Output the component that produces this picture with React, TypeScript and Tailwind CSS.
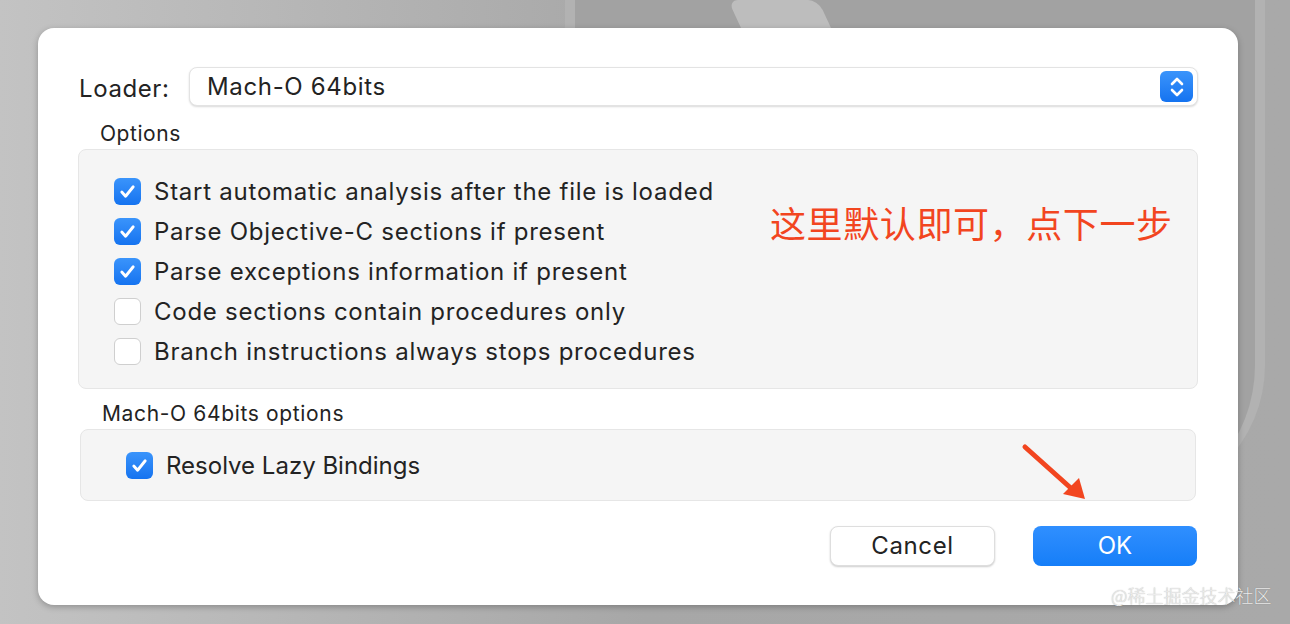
import React from 'react';

const font = { fontFamily: 'Inter, "Noto Sans", sans-serif' };

function Check({ checked }: { checked: boolean }) {
  if (!checked) {
    return <span className="w-[27px] h-[27px] rounded-[6px] bg-white border border-[#cfcfcf] shrink-0" />;
  }
  return (
    <span className="w-[27px] h-[27px] rounded-[6px] bg-gradient-to-b from-[#3a94fb] to-[#1473f0] flex items-center justify-center shrink-0">
      <svg width="19" height="19" viewBox="0 0 20 20" fill="none">
        <path d="M4 10.5l4 4.5 8-10" stroke="white" strokeWidth="3" strokeLinecap="round" strokeLinejoin="round" />
      </svg>
    </span>
  );
}

function Row({ checked, label }: { checked: boolean; label: string }) {
  return (
    <div className="h-[40px] flex items-center gap-[13px]">
      <Check checked={checked} />
      <span className="text-[24px] text-[#232323] tracking-[0.75px] pt-[2px]">{label}</span>
    </div>
  );
}

const options = [
  { checked: true, label: 'Start automatic analysis after the file is loaded' },
  { checked: true, label: 'Parse Objective-C sections if present' },
  { checked: true, label: 'Parse exceptions information if present' },
  { checked: false, label: 'Code sections contain procedures only' },
  { checked: false, label: 'Branch instructions always stops procedures' },
];

export default function App() {
  return (
    <div className="relative w-[1290px] h-[624px] overflow-hidden bg-gradient-to-r from-[#c3c3c3] via-[#a7a7a7] to-[#a9a9a9]" style={font}>
      {/* window behind the dialog */}
      <div className="absolute left-[565px] top-[-40px] w-[700px] h-[545px] rounded-br-[140px] bg-[#a2a2a2] border-l-[10px] border-r-[10px] border-[#b2b2b2]" />
      <div className="absolute left-[735px] top-[0px] w-[90px] h-[30px] bg-[#bdbdbd] skew-x-[25deg] rounded-t-[10px]" />

      <div className="relative pt-[28px] pl-[38px]">
        <div className="w-[1200px] h-[577px] bg-white rounded-[16px] shadow-[0_2px_6px_rgba(0,0,0,0.25)] px-[40px] pt-[39px] flex flex-col">
          {/* loader */}
          <div className="flex items-center h-[39px]">
            <span className="ml-[1px] w-[110px] text-[24px] text-[#232323] tracking-[0.6px] pt-[5px]">Loader:</span>
            <div className="flex-1 h-[39px] rounded-[8px] bg-white border border-[#e3e3e3] shadow-[0_1px_2px_rgba(0,0,0,0.15)] flex items-center pl-[17px] pr-[4px]">
              <span className="flex-1 text-[24px] text-[#232323] tracking-[0.65px]">Mach-O 64bits</span>
              <span className="w-[33px] h-[31px] rounded-[6px] bg-gradient-to-b from-[#3a94fb] to-[#1473f0] flex items-center justify-center">
                <svg width="18" height="24" viewBox="0 0 18 24" fill="none">
                  <path d="M4 9l5-5 5 5M4 15l5 5 5-5" stroke="white" strokeWidth="2.6" strokeLinecap="round" strokeLinejoin="round" />
                </svg>
              </span>
            </div>
          </div>

          {/* options */}
          <div className="mt-[14px] ml-[22px] h-[28px] text-[21px] tracking-[0.55px] text-[#232323] leading-[28px]">Options</div>
          <div className="relative mt-[1px] h-[240px] rounded-[8px] bg-[#f5f5f5] border border-[#e6e6e6] pl-[35px] pt-[21px]">
            {options.map((o) => (
              <Row key={o.label} checked={o.checked} label={o.label} />
            ))}
            <div
              className="absolute left-[691px] top-[47px] text-[36px] tracking-[0.6px] leading-[50px] text-[#f2451f]"
              style={{ fontFamily: '"Noto Sans CJK SC", sans-serif' }}
            >
              这里默认即可，点下一步
            </div>
          </div>

          {/* mach-o options */}
          <div className="mt-[11px] ml-[24px] h-[28px] text-[21px] tracking-[0.65px] text-[#232323] leading-[28px]">Mach-O 64bits options</div>
          <div className="mt-[1px] mx-[2px] h-[72px] rounded-[8px] bg-[#f5f5f5] border border-[#e6e6e6] pl-[45px] flex items-center">
            <div className="flex items-center gap-[13px]">
              <Check checked />
              <span className="text-[24px] text-[#232323] pt-[1px]">Resolve Lazy Bindings</span>
            </div>
          </div>

          {/* buttons */}
          <div className="mt-[25px] flex justify-end gap-[38px] pr-[1px]">
            <button className="w-[165px] h-[40px] rounded-[8px] bg-white border border-[#dedede] shadow-[0_1px_2px_rgba(0,0,0,0.2)] text-[24px] tracking-[0.6px] text-[#232323]">
              Cancel
            </button>
            <button className="w-[164px] h-[40px] rounded-[8px] bg-gradient-to-b from-[#2f8fff] to-[#157ef8] text-[24px] text-white">
              OK
            </button>
          </div>
        </div>
      </div>

      {/* annotation arrow */}
      <svg className="absolute left-[1015px] top-[438px]" width="80" height="72" viewBox="0 0 80 72" fill="none">
        <path d="M10 9L58 52" stroke="#f2451f" strokeWidth="5" strokeLinecap="round" />
        <path d="M48 56L70 61L64 40Z" fill="#f2451f" />
      </svg>

      {/* watermark */}
      <div
        className="absolute left-[1111px] top-[582px] text-[18px] font-light text-[#ececec] [text-shadow:0_0_1px_rgba(0,0,0,0.35)]"
        style={{ fontFamily: '"Noto Sans CJK SC", sans-serif' }}
      >
        @稀土掘金技术社区
      </div>
    </div>
  );
}
